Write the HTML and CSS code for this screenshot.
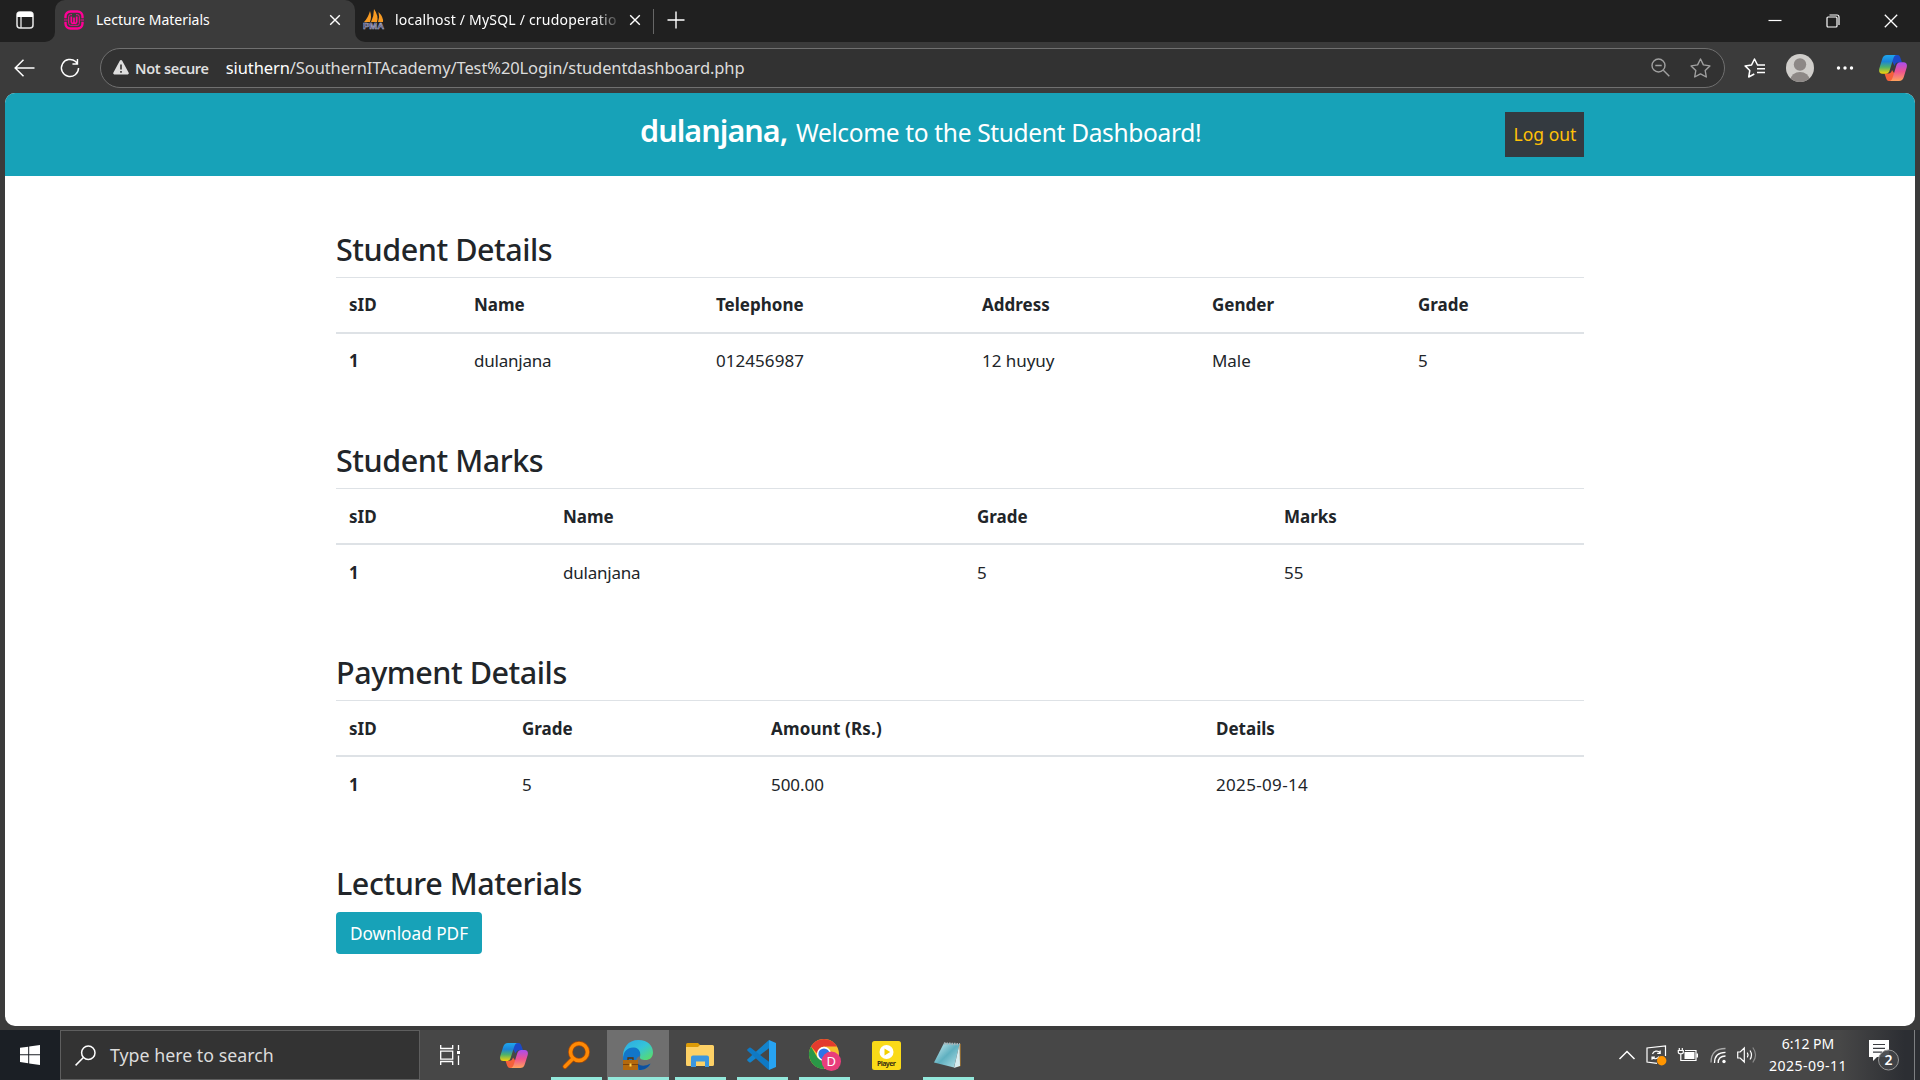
FILE: index.html
```html
<!DOCTYPE html>
<html lang="en">
<head>
<meta charset="utf-8">
<title>Lecture Materials</title>
<link rel="stylesheet" href="styles.css">
</head>
<body>
<svg class="defs" width="0" height="0" aria-hidden="true">
  <defs>
    <linearGradient id="cop-a" x1="0" y1="0" x2="0" y2="1"><stop offset="0" stop-color="#1ea7ee"/><stop offset=".35" stop-color="#1b84d8"/><stop offset=".65" stop-color="#4fb26a"/><stop offset="1" stop-color="#f7d308"/></linearGradient>
    <linearGradient id="cop-b" x1="0" y1="0" x2="0" y2="1"><stop offset="0" stop-color="#a94df0"/><stop offset=".5" stop-color="#ee5390"/><stop offset="1" stop-color="#ffa35c"/></linearGradient>
    <linearGradient id="edge-a" x1="0" y1="0" x2="1" y2="1"><stop offset="0" stop-color="#2aa8e8"/><stop offset=".5" stop-color="#35c4d8"/><stop offset="1" stop-color="#5fe05a"/></linearGradient>
    <linearGradient id="note-a" x1="0" y1="0" x2="1" y2="1"><stop offset="0" stop-color="#d4f1f5"/><stop offset=".5" stop-color="#5fb0c0"/><stop offset="1" stop-color="#b7e2e8"/></linearGradient>
    <symbol id="copilot" viewBox="0 0 28 26">
      <path d="M9 0H18.500C20.500 0 21.200 2 22 4.500L23 7.500H19C17 7.500 16.200 9 15.500 11L14 8Z" fill="#1c49c8"/>
      <path d="M19 26H10C8 26 7.300 24 6.500 21.500L5.500 18.500H9.500C11.500 18.500 12.500 17 13 15L15 18Z" fill="#f4613a"/>
      <path d="M8 0H18C15.500 0 14.800 2 14 4.500L10.800 15C10 17.500 9 18.700 6.500 18.700H3.500C.5 18.700-.4 16.500.3 13.500L3.200 4C4 1.300 5.500 0 8 0Z" fill="url(#cop-a)"/>
      <path d="M20 26H10C12.500 26 13.200 24 14 21.500L17.200 11C18 8.500 19 7.300 21.500 7.300H24.500C27.500 7.300 28.400 9.500 27.700 12.500L24.800 22C24 24.700 22.500 26 20 26Z" fill="url(#cop-b)"/>
    </symbol>
  </defs>
</svg>

<header class="titlebar">
  <div class="tab-actions">
    <svg width="18" height="18" viewBox="0 0 18 18"><rect x="1" y="1" width="16" height="16" rx="3" fill="none" stroke="#e8e8e8" stroke-width="1.500"/><path d="M1 6V4a3 3 0 0 1 3-3h10a3 3 0 0 1 3 3v2Z" fill="#fff"/><path d="M5 6v11" stroke="#e8e8e8" stroke-width="1.300"/></svg>
  </div>
  <div class="tab-well">
    <div class="tab-active">
      <svg width="20" height="20" viewBox="0 0 20 20" fill="none" stroke="#ff0095"><path d="M1.500 8.300V6.500a5 5 0 0 1 5-5h7a5 5 0 0 1 5 5v1.800M1.500 11.700v1.800a5 5 0 0 0 5 5h7a5 5 0 0 0 5-5v-1.800" stroke-width="2.400"/><path d="M0 10h3.500M16.500 10H20" stroke-width="1"/><path d="M8 4.700H6.500Q4.700 4.700 4.700 6.500v7q0 1.800 1.800 1.800h7q1.800 0 1.800-1.800v-7q0-1.800-1.800-1.800H12" stroke-width="1"/><path d="M7.300 6.500V12q0 1.300 1.300 1.300T10 12V7.500V12q0 1.300 1.300 1.300T12.700 12V6.500" stroke-width="1.700"/></svg>
      <span class="tab-title">Lecture Materials</span>
      <svg width="12" height="12" viewBox="0 0 12 12" stroke="#fff" stroke-width="1.400"><path d="M1.200 1.200l9.600 9.600M10.800 1.200l-9.600 9.600"/></svg>
    </div>
  </div>
  <div class="titlebar-rest">
    <svg width="22" height="21" viewBox="0 0 22 21"><path d="M7 2q2 6 0 11H1Q5 9 7 2ZM11 0q5 7 3 13H8q3-6 3-13ZM15.500 3q5 5 4.500 10h-5q2-5 .5-10Z" fill="#f79a22"/><text x="0" y="20" class="pma" textLength="21" lengthAdjust="spacingAndGlyphs">PMA</text></svg>
    <span class="tab-title tab-idle">localhost / MySQL / crudoperatio</span>
    <svg width="12" height="12" viewBox="0 0 12 12" stroke="#fff" stroke-width="1.400"><path d="M1.200 1.200l9.600 9.600M10.800 1.200l-9.600 9.600"/></svg>
    <i class="tab-sep"></i>
    <svg width="18" height="18" viewBox="0 0 18 18" stroke="#fff" stroke-width="1.400"><path d="M9 .5v17M.5 9h17"/></svg>
    <div class="window-controls">
      <svg width="14" height="14" viewBox="0 0 14 14"><path d="M.5 6.500h13" stroke="#fff" stroke-width="1.200"/></svg>
      <svg width="14" height="14" viewBox="0 0 14 14" fill="none" stroke="#fff" stroke-width="1.200"><rect x="1" y="3" width="10" height="10" rx="1"/><path d="M3.500 1h7.500a2 2 0 0 1 2 2v8"/></svg>
      <svg width="14" height="14" viewBox="0 0 14 14" stroke="#fff" stroke-width="1.300"><path d="M.8.8l12.400 12.400M13.200.8L.8 13.200"/></svg>
    </div>
  </div>
</header>

<nav class="toolbar">
  <svg class="nav-back" width="21" height="18" viewBox="0 0 21 18" fill="none" stroke="#fff" stroke-width="1.500"><path d="M9.500.8L1.200 9l8.300 8.200M1.200 9H20.500"/></svg>
  <svg class="nav-reload" width="20" height="20" viewBox="0 0 22 22" fill="none" stroke="#fff" stroke-width="1.600"><path d="M20.400 11a9.400 9.400 0 1 1-3.200-7.100L19 6M19.200 1v5.500h-5.500"/></svg>
  <div class="address">
    <svg width="16" height="15" viewBox="0 0 16 15"><path d="M8 0q.8 0 1.200.8l6.500 12q.6 1.200-.9 1.700H1.200q-1.500-.5-.9-1.700l6.500-12Q7.200 0 8 0Z" fill="#dedede"/><path d="M8 4.500v5M8 11v1.700" stroke="#323232" stroke-width="1.600"/></svg>
    <span class="not-secure">Not secure</span>
    <span class="url"><b>siuthern</b>/SouthernITAcademy/Test%20Login/studentdashboard.php</span>
    <svg class="zoom-icon" width="19" height="19" viewBox="0 0 19 19" fill="none" stroke="#a0a0a0" stroke-width="1.400"><circle cx="7.500" cy="7.500" r="6.500"/><path d="M4.300 7.500h6.400M12.300 12.300l6 6"/></svg>
    <svg width="21" height="20" viewBox="0 0 21 20" fill="none" stroke="#a0a0a0" stroke-width="1.400" stroke-linejoin="round"><path d="M10.500 1l2.900 5.900 6.500 1-4.700 4.600 1.100 6.500-5.800-3.100L4.700 19l1.100-6.500L1.100 7.900l6.500-1Z"/></svg>
  </div>
  <div class="tools">
    <svg width="21" height="20" viewBox="0 0 21 20" fill="none" stroke="#fff" stroke-width="1.500" stroke-linejoin="round"><path d="M13.700 7H13.500L10.500 1 7.600 6.900l-6.500 1 4.700 4.600L4.700 19l5.600-3M13.500 7h3M13 10.700h8M13 7h8M13 14.400h8"/></svg>
    <svg class="avatar" width="28" height="28" viewBox="0 0 28 28"><clipPath id="av"><circle cx="14" cy="14" r="14"/></clipPath><g clip-path="url(#av)"><rect width="28" height="28" fill="#d0cecb"/><circle cx="14" cy="10.500" r="6.200" fill="#8d8886"/><ellipse cx="14" cy="26" rx="9.500" ry="8" fill="#8d8886"/></g></svg>
    <svg class="more" width="18" height="6" viewBox="0 0 18 6" fill="#fff"><circle cx="2.500" cy="3" r="1.700"/><circle cx="9" cy="3" r="1.700"/><circle cx="15.500" cy="3" r="1.700"/></svg>
    <svg class="copilot" width="28" height="26"><use href="#copilot"/></svg>
  </div>
</nav>

<main class="page">
  <div class="banner">
    <div class="welcome"><strong>dulanjana,</strong> <span>Welcome to the Student Dashboard!</span></div>
    <a class="logout">Log out</a>
  </div>
  <div class="container">
    <section>
      <h2>Student Details</h2>
      <table>
        <colgroup><col class="w-d1"><col class="w-d2"><col class="w-d3"><col class="w-d4"><col class="w-d5"><col></colgroup>
        <thead><tr><th>sID</th><th>Name</th><th>Telephone</th><th>Address</th><th>Gender</th><th>Grade</th></tr></thead>
        <tbody><tr><th>1</th><td class="name">dulanjana</td><td class="phone">012456987</td><td>12 huyuy</td><td>Male</td><td>5</td></tr></tbody>
      </table>
    </section>
    <section>
      <h2>Student Marks</h2>
      <table class="low">
        <colgroup><col class="w-m1"><col class="w-m2"><col class="w-m3"><col></colgroup>
        <thead><tr><th>sID</th><th>Name</th><th>Grade</th><th>Marks</th></tr></thead>
        <tbody><tr><th>1</th><td class="name">dulanjana</td><td>5</td><td>55</td></tr></tbody>
      </table>
    </section>
    <section>
      <h2>Payment Details</h2>
      <table class="low">
        <colgroup><col class="w-p1"><col class="w-p2"><col class="w-p3"><col></colgroup>
        <thead><tr><th>sID</th><th>Grade</th><th class="amount">Amount (Rs.)</th><th>Details</th></tr></thead>
        <tbody><tr><th>1</th><td>5</td><td>500.00</td><td class="date">2025-09-14</td></tr></tbody>
      </table>
    </section>
    <section>
      <h2>Lecture Materials</h2>
      <a class="btn">Download PDF</a>
    </section>
  </div>
</main>

<footer class="taskbar">
  <div class="start"><svg width="20" height="20" viewBox="0 0 20 20" fill="#fff"><path d="M0 2.800L8.200 1.700V9.300H0ZM9.200 1.500L20 0V9.300H9.200ZM0 10.300H8.200V18.200L0 17.100ZM9.200 10.300H20V20L9.200 18.400Z"/></svg></div>
  <div class="search">
    <svg width="21" height="21" viewBox="0 0 21 21" fill="none" stroke="#fff" stroke-width="1.500"><circle cx="13.300" cy="7.700" r="6.700"/><path d="M8.400 12.500L.6 20.400"/></svg>
    <span>Type here to search</span>
  </div>
  <div class="task-view"><svg width="20" height="20" viewBox="0 0 20 20" fill="none" stroke="#fff" stroke-width="1.300"><path d="M.7 0v3.500h12V0M.7 20v-3.500h12V20M.7 6.200h12v8H.7ZM18.500 0v5M18.500 10.500V20"/><path d="M17 6h3v3h-3z" fill="#fff" stroke="none"/></svg></div>
  <div class="apps">
    <div class="app"><svg width="28" height="25" viewBox="0 0 28 26" preserveAspectRatio="none"><use href="#copilot"/></svg></div>
    <div class="app open"><svg width="28" height="28" viewBox="0 0 28 28" fill="none" stroke-linecap="round"><g stroke="#a64b08" stroke-width="5"><circle cx="17" cy="11" r="8.500"/><path d="M10.500 18L3 25.500"/></g><g stroke="#ff8a05" stroke-width="3.500"><circle cx="17" cy="11" r="8.500"/><path d="M10.500 18L3 25.500"/></g></svg></div>
    <div class="app open current"><svg width="30" height="30" viewBox="0 0 30 30"><path d="M0 19C-1 8 5 0 15.500 0 25 0 30 6 30 12.500c0 5-3.500 7.500-7.500 7.500-3.500 0-6-1-5.500-3 .5-2 .5-3-.5-4.500C12 7 3 8 0 19Z" fill="url(#edge-a)"/><path d="M0 19C0 11 5 7 11 7.500c5 .5 7.500 5 5.500 9-2 0-4 2.500-3 6 1.500 4 6 5.500 14 1.500C25 28 21 30 16 30 7 30 0 26 0 19Z" fill="#1276c9"/><path d="M13.500 20c0 5 6 8 14 3.500C25 28 21 30 16 30Z" fill="#0d51a0"/><rect y="20" width="15" height="10" fill="#b4690d"/><path d="M5 20v-2h5v2" fill="none" stroke="#5b3208" stroke-width="1.300"/><path d="M0 24.500h15" stroke="#7c430a"/><rect x="6.500" y="23.500" width="2" height="3" fill="#ffd34a"/></svg></div>
    <div class="app open"><svg width="28" height="24" viewBox="0 0 28 24"><path d="M0 1.500Q0 0 1.500 0H12l2 2v3H0Z" fill="#dc9b08"/><path d="M0 4h12l2-2h12.500Q28 2 28 3.500v18Q28 23 26.500 23h-25Q0 23 0 21.500Z" fill="#fdd166"/><path d="M5 24V14.500Q5 12.500 7 12.500h14q2 0 2 2V24h-4v-5.500H10V24Z" fill="#3b97e0"/></svg></div>
    <div class="app open"><svg width="30" height="30" viewBox="0 0 30 30"><path d="M22 0L29 3V27L22 30Z" fill="#27a3f2"/><path d="M22 0V8.200L3.800 22.300Q3 22.900 2.200 22.300L.5 20.700Q-.2 20 .5 19.300Z" fill="#1383cc"/><path d="M22 30V21.800L3.800 7.700Q3 7.100 2.200 7.700L.5 9.300Q-.2 10 .5 10.700L20 28.500Z" fill="#0f79c4"/></svg></div>
    <div class="app open"><svg class="chrome" width="32" height="32" viewBox="0 0 32 32"><circle cx="15" cy="15" r="15" fill="#f6c12c"/><path d="M2 7.500A15 15 0 0 1 28 7.500H15Q9 8 8.500 15Z" fill="#e33b2e"/><path d="M2 7.500A15 15 0 0 0 15 30L21.500 18.800 8.500 18.700Z" fill="#2a9747"/><circle cx="15" cy="15" r="7.200" fill="#fff"/><circle cx="15" cy="15" r="5.600" fill="#2f73e8"/><circle cx="22.300" cy="22.300" r="9.700" fill="#e83e7b"/><text x="22.300" y="27" class="badge-d">D</text></svg></div>
    <div class="app"><svg width="29" height="29" viewBox="0 0 29 29"><rect width="29" height="29" rx="2.500" fill="#fada18"/><circle cx="14.500" cy="11" r="7" fill="#fff"/><path d="M12.500 7.500v7l5.700-3.500Z" fill="#f3d000"/><text x="14.500" y="25" class="player" textLength="19">Player</text></svg></div>
    <div class="app open"><svg width="28" height="28" viewBox="0 0 28 28"><path d="M25 2.500l2 .5v22l-4 1Z" fill="#8c6a36"/><path d="M10 2L25.500 3 20 26.500l-20-5Z" fill="url(#note-a)"/><path d="M25.500 3L26 25l-6 2Z" fill="#d8edf0"/><path d="M10 2.500l16 .8" stroke="#a9b4b8" stroke-width="2.500" stroke-dasharray="1.500 1"/></svg></div>
  </div>
  <div class="tray">
    <svg width="16" height="10" viewBox="0 0 16 10" fill="none" stroke="#fff" stroke-width="1.500"><path d="M.5 9L8 1.500 15.500 9"/></svg>
    <svg width="21" height="21" viewBox="0 0 21 21" fill="none" stroke="#fff" stroke-width="1.200"><path d="M19.500 11V1L1 3v14l10 1.400"/><path d="M14 7.500A4.500 4.500 0 0 0 6.500 9M14.200 5.500v2.800h-3M6 12.500a4.500 4.500 0 0 0 7-1M6 14.700v-2.600h3"/><circle cx="15.700" cy="15.700" r="4.700" fill="#ff9500" stroke="none"/></svg>
    <svg width="21" height="14" viewBox="0 0 21 14"><path d="M7 2.500h11v10H6" fill="none" stroke="#fff" stroke-width="1.200"/><path d="M6.500 4h10v7h-10ZM18.500 5.500H20v4h-1.500Z" fill="#fff"/><path d="M1.300 0v2.500M4.300 0v2.500M.3 2.500h5v1.800q0 1.500-2.500 1.500T.3 4.300ZM2.800 5.800V12.500H6" fill="none" stroke="#fff" stroke-width="1.200"/></svg>
    <svg width="16" height="17" viewBox="0 0 16 17" fill="none" stroke="#fff" stroke-width="1.300"><path d="M1 15.500Q1 1.500 15.500 1.500" stroke="#aaa"/><path d="M4.500 16Q4.500 5.300 15.500 5.300M8.200 16Q8.200 9 15.500 9"/><circle cx="14" cy="14.500" r="1.700" fill="#fff" stroke="none"/></svg>
    <svg width="21" height="18" viewBox="0 0 21 18" fill="none" stroke="#fff" stroke-width="1.200"><path d="M.7 6h2.500L7.300 2v14L3.200 12H.7ZM10.300 6.700q1.500 2.300 0 4.600M13 4.500q3 4.500 0 9"/><path d="M15.800 1.500q5.500 7.500 0 15" stroke="#8b8b8b"/></svg>
    <div class="clock"><span>6:12 PM</span><span class="clock-date">2025-09-11</span></div>
    <svg class="notify" width="31" height="31" viewBox="0 0 31 31"><path d="M0 0H20V17H8l-4 4V17H0Z" fill="#fff"/><path d="M4 4.500h12M4 8.300h12M4 12.100h9" stroke="#3a3d42" stroke-width="1.200"/><circle cx="19.500" cy="20" r="10" fill="#424447" fill-opacity=".93" stroke="#969696"/><text x="19.500" y="25.200" class="notify-n">2</text></svg>
    <i class="show-desktop"></i>
  </div>
</footer>
</body>
</html>
```
FILE: styles.css
```css
* { box-sizing: border-box; }
body {
  margin: 0;
  width: 1920px;
  height: 1080px;
  overflow: hidden;
  display: flex;
  flex-direction: column;
  background: #3b3b3b;
  font-family: "Noto Sans", "Open Sans", sans-serif;
  color: #212529;
}
svg { display: block; flex: none; overflow: visible; }
.defs { width: 0; height: 0; }

/* Title bar */
.titlebar { display: flex; height: 42px; flex: none; color: #fff; }
.tab-actions {
  width: 55px;
  padding: 11px 0 0 16px;
  background: #202020;
  border-bottom-right-radius: 10px;
}
.tab-well { width: 300px; background: #202020; }
.tab-active {
  height: 42px;
  display: flex;
  align-items: center;
  padding: 0 14px 3px 9px;
  background: #3b3b3b;
  border-radius: 10px 10px 0 0;
}
.tab-title { font-size: 14px; line-height: 20px; white-space: nowrap; }
.tab-active .tab-title { margin-left: 12px; flex: 1; }
.titlebar-rest {
  flex: 1;
  display: flex;
  align-items: center;
  padding: 0 22px 3px 8px;
  background: #202020;
  border-bottom-left-radius: 10px;
}
.tab-idle {
  width: 222px;
  margin: 0 12px 0 10px;
  letter-spacing: .2px;
  -webkit-mask-image: linear-gradient(90deg, #000 200px, transparent 226px);
  mask-image: linear-gradient(90deg, #000 200px, transparent 226px);
}
.tab-sep { width: 1px; height: 25px; margin: 3px 13px 0 12px; background: #666; }
.window-controls { margin-left: auto; padding-top: 3px; display: flex; gap: 44px; }
.pma { font: bold 9px "Liberation Sans", sans-serif; fill: #34365f; stroke: #b9bbd8; stroke-width: .5px; }

/* Toolbar */
.toolbar { display: flex; align-items: center; height: 51px; flex: none; }
.nav-back { margin-left: 14px; }
.nav-reload { margin-left: 25px; }
.address {
  width: 1625px;
  height: 40px;
  margin-left: 20px;
  padding: 0 13px 0 12px;
  display: flex;
  align-items: center;
  background: #323232;
  border: 1px solid #707070;
  border-radius: 20px;
}
.not-secure { margin-left: 6px; font-size: 14.500px; font-weight: 600; letter-spacing: -.3px; color: #dedede; }
.url { margin-left: 17px; font-size: 16.500px; letter-spacing: -.1px; color: #dcdcdc; }
.url b { font-weight: 400; color: #fff; }
.zoom-icon { margin-left: auto; margin-right: 20px; }
.tools { flex: 1; display: flex; align-items: center; padding-left: 19px; }
.avatar { margin-left: 21px; }
.more { margin-left: 22px; }
.copilot { margin-left: 25px; }

/* Page */
.page {
  height: 933px;
  margin: 0 5px;
  flex: none;
  overflow: hidden;
  background: #fff;
  border-radius: 10px;
}
.banner { display: flex; height: 83px; padding-top: 19px; background: #17a2b8; }
.welcome { width: 865px; margin: -2px 0 0 635px; line-height: 40px; color: #fff; white-space: nowrap; }
.welcome strong { font-size: 30.500px; font-weight: 600; letter-spacing: -.95px; }
.welcome span { margin-left: 4.500px; font-size: 24.500px; letter-spacing: -.34px; }
.logout {
  width: 79px;
  height: 45px;
  padding-left: 1px;
  background: #343a40;
  color: #ffc107;
  font-size: 17.500px;
  line-height: 44px;
  text-align: center;
}
.container { width: 1248px; margin: 48.600px 0 0 331px; }
section { margin-bottom: 48.300px; }
h2 { margin: 0; padding-top: 3px; height: 52.200px; font-size: 30.500px; font-weight: 500; line-height: 43px; letter-spacing: -.45px; }
table { width: 100%; table-layout: fixed; border-collapse: separate; border-spacing: 0; font-size: 17px; }
th, td { padding: 13px 13px 14px; line-height: 27px; text-align: left; }
.low th, .low td { padding-top: 14px; padding-bottom: 13px; }
thead th { border-top: 1px solid #dee2e6; border-bottom: 2px solid #dee2e6; }
td { letter-spacing: -.05px; }
.name { letter-spacing: -.22px; }
.phone { letter-spacing: .05px; }
.amount { letter-spacing: .17px; }
.date { letter-spacing: .33px; }
.w-d1 { width: 125px; } .w-d2 { width: 242px; } .w-d3 { width: 266px; } .w-d4 { width: 230px; } .w-d5 { width: 206px; }
.w-m1 { width: 214px; } .w-m2 { width: 414px; } .w-m3 { width: 307px; }
.w-p1 { width: 173px; } .w-p2 { width: 249px; } .w-p3 { width: 445px; }
.btn {
  display: block;
  width: 146px;
  height: 42px;
  margin-top: 1px;
  background: #17a2b8;
  border-radius: 4px;
  color: #fff;
  font-size: 17.200px;
  line-height: 43px;
  text-align: center;
}

/* Taskbar */
.taskbar {
  display: flex;
  height: 50px;
  margin-top: 4px;
  flex: none;
  background: linear-gradient(90deg, #474747 1840px, #2c2e33 1905px);
}
.start { width: 60px; display: flex; align-items: center; justify-content: center; background: #1b1f25; }
.search {
  width: 360px;
  display: flex;
  align-items: center;
  padding-left: 14px;
  gap: 14px;
  background: #333;
  border: 1px solid #5e5e5e;
  color: #dcdcdc;
  font-size: 17.800px;
}
.task-view { width: 63px; display: flex; align-items: center; padding-left: 20px; }
.apps { display: flex; }
.app { width: 62px; display: flex; align-items: center; justify-content: center; }
.open { background: linear-gradient(#93e8db, #93e8db) center bottom / 51px 3px no-repeat; }
.current { background: linear-gradient(#93e8db, #93e8db) bottom / 61px 3px no-repeat, #6f6f6f; }
.chrome { margin-left: 1px; }
.badge-d { font: 13px "Noto Sans", sans-serif; text-anchor: middle; fill: #fff; }
.player { font: bold 7px "Noto Sans", sans-serif; text-anchor: middle; fill: #3b3410; }
.tray { display: flex; align-items: center; margin-left: 640px; color: #fff; }
.tray > svg { margin-right: 11px; }
.clock {
  width: 76px;
  margin: 0 -1px 0 1px;
  flex: none;
  display: flex;
  flex-direction: column;
  align-items: center;
  font-size: 14px;
  line-height: 22.500px;
  white-space: nowrap;
}
.clock-date { letter-spacing: .45px; font-size: 14.100px; }
.tray > .notify { margin: 0 14px 0 24px; }
.notify-n { font: 600 14px "Noto Sans", sans-serif; text-anchor: middle; fill: #fff; }
.show-desktop { width: 1px; flex: none; height: 50px; background: #7d7f82; }
```
